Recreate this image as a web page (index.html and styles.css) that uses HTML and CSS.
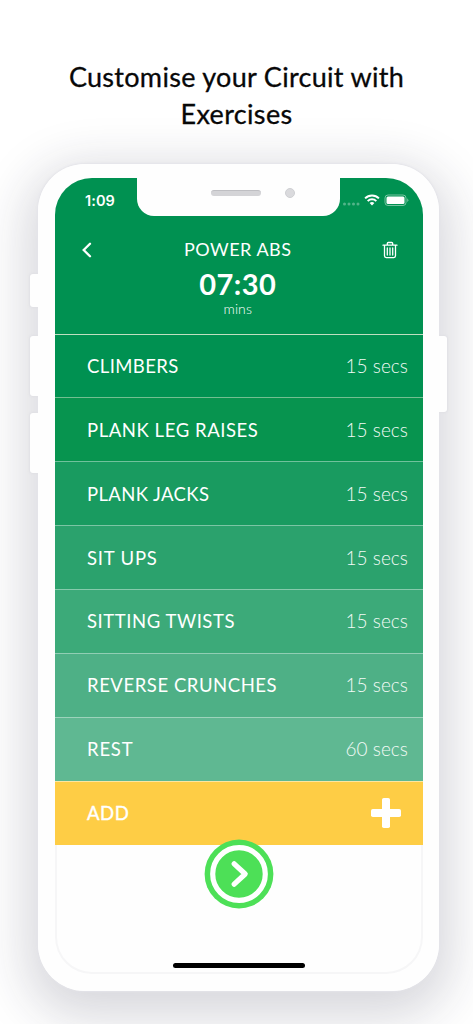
FILE: index.html
```html
<!DOCTYPE html>
<html lang="en">
<head>
<meta charset="utf-8">
<title>Customise your Circuit</title>
<link rel="stylesheet" href="styles.css">
</head>
<body>
<main class="page">
  <h1 class="headline"><span class="headline-top">Customise your Circuit with</span><br><span class="headline-end">Exercises</span></h1>
  <div class="phone">
    <i class="key key-mute"></i><i class="key key-up"></i><i class="key key-down"></i><i class="key key-power"></i>
    <div class="body">
      <div class="screen">
        <header class="header">
          <div class="status">
            <span class="clock">1:09</span>
            <div class="notch"><i class="speaker"></i><i class="camera"></i></div>
            <svg class="indicators" width="68" height="16" viewBox="0 0 68 16">
              <g fill="#fff" opacity=".32"><circle cx="3.5" cy="12" r="1.5"/><circle cx="8" cy="12" r="1.5"/><circle cx="12.5" cy="12" r="1.5"/><circle cx="17" cy="12" r="1.5"/></g>
              <g fill="none" stroke="#fff" stroke-width="2"><path d="M24.1 6.4a9.8 9.8 0 0 1 13.8 0"/><path d="M26.7 9.1a6.1 6.1 0 0 1 8.6 0"/></g>
              <path d="M28.6 11.1a3.5 3.5 0 0 1 4.8 0L31 13.6z" fill="#fff"/>
              <rect x="44" y="3" width="21" height="10.5" rx="3" fill="none" stroke="#fff" opacity=".45"/>
              <rect x="45.5" y="4.5" width="18" height="7.5" rx="1.5" fill="#fff"/>
              <path d="M66.3 6.3q2 1.9 0 3.8z" fill="#fff" opacity=".5"/>
            </svg>
          </div>
          <div class="nav">
            <svg class="back" width="12" height="18" viewBox="0 0 12 18"><path d="M9 2.7 2.7 9 9 15.3" fill="none" stroke="#fff" stroke-width="2.3" stroke-linecap="round"/></svg>
            <div class="summary">
              <h2 class="circuit">POWER ABS</h2>
              <div class="total">07:30</div>
              <div class="unit">mins</div>
            </div>
            <svg class="trash" width="16" height="18" viewBox="0 0 16 18" fill="none" stroke="#fff" stroke-width="1.3" stroke-linecap="round" stroke-linejoin="round"><path d="M1 4.2h14M5.3 4V2.5q0-1 1-1h3.4q1 0 1 1V4M2.5 4.5v10.3q0 1.8 1.7 1.8h7.6q1.7 0 1.7-1.8V4.5M5.3 7v7M8 7v7M10.7 7v7"/></svg>
          </div>
        </header>
        <ul class="list">
          <li class="row r1"><span class="name n1">CLIMBERS</span><span class="secs">15 secs</span></li>
          <li class="row r2"><span class="name n2">PLANK LEG RAISES</span><span class="secs">15 secs</span></li>
          <li class="row r3"><span class="name n3">PLANK JACKS</span><span class="secs">15 secs</span></li>
          <li class="row r4"><span class="name n4">SIT UPS</span><span class="secs">15 secs</span></li>
          <li class="row r5"><span class="name n5">SITTING TWISTS</span><span class="secs">15 secs</span></li>
          <li class="row r6"><span class="name n6">REVERSE CRUNCHES</span><span class="secs">15 secs</span></li>
          <li class="row r7"><span class="name n7">REST</span><span class="secs">60 secs</span></li>
          <li class="row add"><span class="name n8">ADD</span>
            <svg class="plus" width="30" height="30" viewBox="0 0 30 30" fill="#fff"><rect x="11" width="8" height="30" rx="1.8"/><rect y="11" width="30" height="8" rx="1.8"/></svg></li>
        </ul>
        <footer class="footer">
          <svg class="go" width="70" height="70" viewBox="0 0 70 70"><circle cx="35" cy="35" r="34.4" fill="#4de057"/><circle cx="35" cy="35" r="26.3" fill="none" stroke="#fff" stroke-width="5.2"/><path d="M30.2 24.8 41.2 35l-11 10.2" fill="none" stroke="#fff" stroke-width="5.2" stroke-linecap="round" stroke-linejoin="round"/></svg>
          <i class="home"></i>
        </footer>
      </div>
    </div>
  </div>
</main>
</body>
</html>
```
FILE: styles.css
```css
* { box-sizing: border-box; }
body { margin: 0; background: #fff; font-family: Lato, sans-serif; color: #fff; }
.page { width: 473px; height: 1024px; overflow: hidden; }
.headline { margin: 0; padding-top: 58px; height: 164px; font-size: 27px; line-height: 37px; font-weight: 400; text-align: center; color: #080808; -webkit-text-stroke: .3px #080808; }
.headline-top { letter-spacing: .3px; }
.headline-end { letter-spacing: .35px; }
.phone { position: relative; width: 401px; height: 827px; margin-left: 38px; border-radius: 47px; box-shadow: 0 0 2px 1px #e4e4e9, 0 14px 50px 12px rgba(32,36,62,.18); }
.body { position: relative; height: 100%; padding: 14px 16.5px 16px 16.5px; border-radius: 47px; background: #fefefe; }
.screen { display: flex; flex-direction: column; height: 796px; border-radius: 37px; overflow: hidden; box-shadow: inset 0 0 0 2px #f6f6f7; }
.key { position: absolute; width: 12px; background: #fefefe; border-radius: 3px; box-shadow: 0 0 2px 1px #e1e1e5; }
.key-mute { left: -8px; top: 110px; height: 33px; }
.key-up { left: -8px; top: 172px; height: 60px; }
.key-down { left: -8px; top: 249px; height: 60px; }
.key-power { right: -8px; top: 172px; height: 76px; }
.header { height: 155.5px; background: #009151; }
.status { display: flex; height: 58px; }
.clock { width: 82px; padding: 14px 0 0 30.5px; font: 600 14.5px/18px Inter, sans-serif; letter-spacing: .1px; }
.notch { display: flex; width: 203px; height: 38px; padding: 9px 0 0 74px; background: #fefefe; border-radius: 0 0 17px 17px; }
.speaker { width: 50px; height: 6px; margin-top: 3px; border-radius: 3px; background: #d4d4d7; border-top: 1px solid #bfbfc3; }
.camera { width: 10px; height: 10px; margin: 1px 0 0 24px; border-radius: 50%; background: #dadadd; border: 1px solid #cecfd2; }
.indicators { margin: 14px 0 0 1.5px; }
.nav { display: flex; justify-content: space-between; padding: 0 25px 0 26.5px; }
.back, .trash { margin-top: 5px; }
.summary { width: 220px; margin-left: 1px; text-align: center; }
.circuit { margin: 0; font-size: 18px; line-height: 26px; font-weight: 400; letter-spacing: .5px; }
.total { margin-top: 4.5px; font-size: 29px; line-height: 34px; font-weight: 700; letter-spacing: .45px; }
.unit { margin-top: -.5px; font-size: 14px; line-height: 18px; font-weight: 300; letter-spacing: .1px; }
.list { margin: 0; padding: 0; list-style: none; }
.row { display: flex; align-items: center; justify-content: space-between; height: 63.88px; padding: 0 14.5px 0 32.5px; border-top: 1px solid rgba(255,255,255,.38); background-clip: border-box; }
.name { font-size: 18.5px; line-height: 26px; font-weight: 400; letter-spacing: .55px; }
.n1 { letter-spacing: .4px; }
.n2 { letter-spacing: .56px; }
.n3 { letter-spacing: .38px; }
.n4, .n7 { letter-spacing: .8px; }
.secs { font-size: 19px; line-height: 26px; font-weight: 300; letter-spacing: .05px; color: #f2faf6; }
.r1 { background: #009151; border-top: 1.5px solid #bfdfc0; }
.r2 { background: #07944f; border-color: #72bf91; }
.r3 { background: #199b60; }
.r4 { background: #2ba26d; }
.r5 { background: #3caa79; }
.r6 { background: #4eb086; }
.r7 { background: #5fb892; }
.add { background: #fecd45; border-color: #fce6a0; padding-right: 22px; }
.add .name { -webkit-text-stroke: .4px #fff; }
.footer { position: relative; flex: 1; }
.go { position: absolute; left: 149px; top: -6px; }
.home { position: absolute; left: 118.5px; top: 118px; width: 132px; height: 5.5px; border-radius: 3px; background: #000; }
```
